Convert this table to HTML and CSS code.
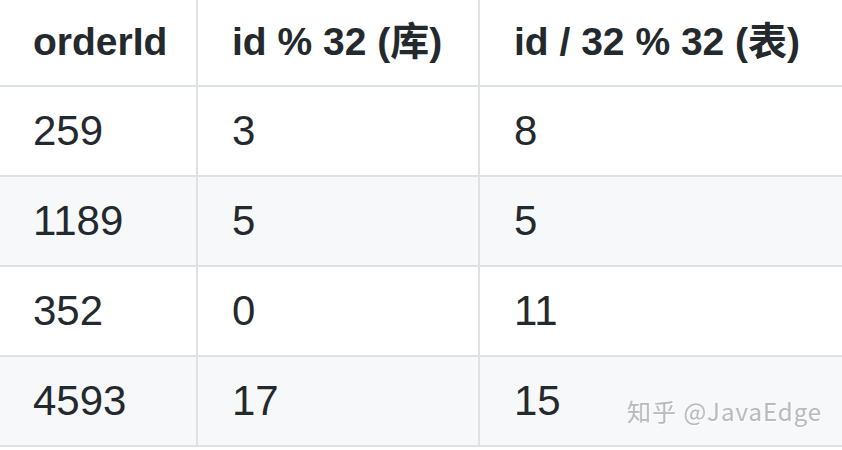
FILE: index.html
```html
<!DOCTYPE html>
<html lang="zh">
<head>
<meta charset="utf-8">
<link rel="stylesheet" href="styles.css">
</head>
<body>
<div class="page">
  <div class="table">
    <div class="cell head first">orderId</div>
    <div class="cell head">id % 32 (库)</div>
    <div class="cell head last">id / 32 % 32 (表)</div>

    <div class="cell first">259</div>
    <div class="cell">3</div>
    <div class="cell last">8</div>

    <div class="cell alt first">1189</div>
    <div class="cell alt">5</div>
    <div class="cell alt last">5</div>

    <div class="cell first">352</div>
    <div class="cell">0</div>
    <div class="cell last">11</div>

    <div class="cell alt first">4593</div>
    <div class="cell alt">17</div>
    <div class="cell alt last">15</div>
  </div>
  <div class="watermark">知乎 @JavaEdge</div>
</div>
</body>
</html>
```

FILE: styles.css
```css
html, body {
  margin: 0;
  padding: 0;
  background: #ffffff;
}
body {
  width: 842px;
  height: 450px;
  overflow: hidden;
  font-family: "Liberation Sans", "Noto Sans CJK SC", sans-serif;
  color: #24292e;
}
.page {
  position: relative;
  width: 842px;
  height: 450px;
}
.table {
  display: grid;
  grid-template-columns: 198px 282px 1fr;
  grid-auto-rows: 90px;
  grid-template-rows: 87px;
}
.cell {
  box-sizing: border-box;
  display: flex;
  align-items: center;
  padding: 0 34px;
  border-right: 2px solid #dfe2e5;
  border-bottom: 2px solid #dfe2e5;
  font-size: 42px;
  line-height: 1;
  white-space: nowrap;
  background: #ffffff;
}
.cell.first {
  padding-left: 33px;
}
.cell.last {
  border-right: none;
}
.cell.head {
  font-weight: 700;
  font-size: 39px;
  padding-bottom: 2px;
}
.cell.alt {
  background: #f6f8fa;
}
.watermark {
  position: absolute;
  left: 627px;
  top: 394px;
  font-family: "Noto Sans CJK SC", sans-serif;
  font-size: 24px;
  line-height: 34px;
  color: #b8babc;
  text-shadow: 1px 1px 0 #ffffff;
  letter-spacing: 1px;
}
```
